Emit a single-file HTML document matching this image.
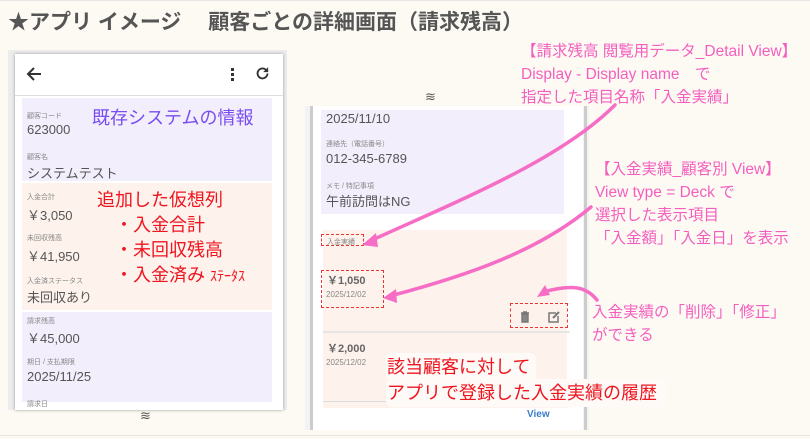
<!DOCTYPE html>
<html><head><meta charset="utf-8"><style>
*{margin:0;padding:0;box-sizing:border-box}
body{width:810px;height:439px;background:#fdfaf3;position:relative;overflow:hidden;font-family:"Liberation Sans","Noto Sans CJK JP",sans-serif}
.a{position:absolute;white-space:nowrap}
.lb{font-size:7px;color:#888}
.v{font-size:13px;color:#555}
.pk{color:#f45fbf;font-size:15.5px;line-height:23px}
.rd{color:#f0141e}
.box{position:absolute;border:1px dashed #e33}
</style></head><body>
<div class="a" style="left:0;top:0;width:810px;height:1px;background:#e6e6e6"></div>
<div class="a" style="left:8px;top:6px;font-size:21px;font-weight:bold;color:#555">★アプリ イメージ　 顧客ごとの詳細画面（請求残高）</div>

<!-- left phone -->
<div class="a" style="left:8px;top:50px;width:279px;height:360px;background:#ececec"></div>
<div class="a" style="left:15px;top:54px;width:268px;height:356px;background:#fff;box-shadow:0 0 3px #999"></div>
<svg class="a" style="left:26px;top:66px" width="16" height="16" viewBox="0 0 16 16"><path d="M15 8H2M8 2L2 8l6 6" stroke="#333" stroke-width="2" fill="none"/></svg>
<div class="a" style="left:231px;top:68px;width:3px;height:3px;background:#333;box-shadow:0 5px 0 #333,0 10px 0 #333"></div>
<svg class="a" style="left:254px;top:65px" width="17" height="17" viewBox="0 0 24 24"><path d="M19 12a7 7 0 1 1-2-5" stroke="#333" stroke-width="2.6" fill="none"/><path d="M20 3v7h-7z" fill="#333"/></svg>
<div class="a" style="left:15px;top:95px;width:268px;height:1px;background:#ddd"></div>
<div class="a" style="left:22px;top:98px;width:250px;height:83px;background:#f2eefc"></div>
<div class="a" style="left:22px;top:183px;width:250px;height:127px;background:#fdf2ec"></div>
<div class="a" style="left:22px;top:312px;width:250px;height:90px;background:#f2eefc"></div>
<div class="a lb" style="left:27px;top:111px">顧客コード</div>
<div class="a v" style="left:27px;top:122px">623000</div>
<div class="a lb" style="left:27px;top:152px">顧客名</div>
<div class="a v" style="left:27px;top:163px">システムテスト</div>
<div class="a" style="left:92px;top:104px;font-size:18px;color:#7a4df0">既存システムの情報</div>
<div class="a lb" style="left:27px;top:192px">入金合計</div>
<div class="a v" style="left:27px;top:205px">￥3,050</div>
<div class="a lb" style="left:27px;top:233px">未回収残高</div>
<div class="a v" style="left:27px;top:246px">￥41,950</div>
<div class="a lb" style="left:27px;top:276px">入金済ステータス</div>
<div class="a v" style="left:27px;top:287px">未回収あり</div>
<div class="a rd" style="left:97px;top:188px;font-size:18px;line-height:25px">追加した仮想列<br>　・入金合計<br>　・未回収残高<br>　・入金済み <span style="font-size:14px">ｽﾃｰﾀｽ</span></div>
<div class="a lb" style="left:27px;top:316px">請求残高</div>
<div class="a v" style="left:27px;top:328px">￥45,000</div>
<div class="a lb" style="left:27px;top:357px">期日 / 支払期限</div>
<div class="a v" style="left:27px;top:369px">2025/11/25</div>
<div class="a lb" style="left:27px;top:399px">請求日</div>
<div class="a" style="left:140px;top:408px;font-size:13px;color:#555">≋</div>

<!-- right phone -->
<div class="a" style="left:425px;top:89px;font-size:13px;color:#555">≋</div>
<div class="a" style="left:305px;top:106px;width:284px;height:324px;background:#f3f3f3"></div>
<div class="a" style="left:313px;top:106px;width:270px;height:324px;background:#fff"></div>
<div class="a" style="left:310px;top:106px;width:3px;height:324px;background:#ccc"></div>
<div class="a" style="left:584px;top:106px;width:3px;height:324px;background:#ccc"></div>
<div class="a" style="left:321px;top:110px;width:243px;height:104px;background:#f2eefc"></div>
<div class="a v" style="left:326px;top:111px">2025/11/10</div>
<div class="a lb" style="left:326px;top:139px">連絡先（電話番号）</div>
<div class="a v" style="left:326px;top:151px">012-345-6789</div>
<div class="a lb" style="left:326px;top:181px">メモ / 特記事項</div>
<div class="a v" style="left:326px;top:191px">午前訪問はNG</div>
<div class="a" style="left:323px;top:230px;width:244px;height:178px;background:#fdf2ec"></div>
<div class="a" style="left:323px;top:331px;width:247px;height:2px;background:#e6e6e6"></div>
<div class="a" style="left:323px;top:401px;width:247px;height:1px;background:#ddd"></div>
<div class="a lb" style="left:327px;top:237px">入金実績</div>
<div class="box" style="left:321px;top:234px;width:43px;height:12px"></div>
<div class="a" style="left:327px;top:272px;font-size:11px;font-weight:bold;color:#666">￥1,050</div>
<div class="a" style="left:326px;top:290px;font-size:8px;color:#888">2025/12/02</div>
<div class="box" style="left:321px;top:270px;width:63px;height:38px"></div>
<svg class="a" style="left:519px;top:311px" width="12" height="12" viewBox="0 0 12 12"><path d="M2 2h8M4 1h4M3 3h6v8H3z" stroke="#777" stroke-width="1.4" fill="#888"/></svg>
<svg class="a" style="left:548px;top:311px" width="13" height="12" viewBox="0 0 13 12"><path d="M8 2H1v9h9V5" stroke="#777" stroke-width="1.5" fill="none"/><path d="M5 7l6-6" stroke="#777" stroke-width="2"/></svg>
<div class="box" style="left:510px;top:303px;width:58px;height:25px"></div>
<div class="a" style="left:327px;top:340px;font-size:11px;font-weight:bold;color:#666">￥2,000</div>
<div class="a" style="left:326px;top:358px;font-size:8px;color:#888">2025/12/02</div>
<div class="a" style="left:386px;top:353px;width:150px;height:28px;background:#fdfaf7;border-radius:6px"></div>
<div class="a" style="left:386px;top:379px;width:280px;height:28px;background:#fdfaf7;border-radius:6px"></div>
<div class="a rd" style="left:387px;top:354px;font-size:18px;line-height:26px">該当顧客に対して<br>アプリで登録した入金実績の履歴</div>
<div class="a" style="left:527px;top:409px;font-size:10px;font-weight:bold;color:#3a7dc8">View</div>
<div class="a" style="left:0;top:435px;width:810px;height:1px;background:#e4e4e4"></div>

<!-- pink annotations -->
<div class="a pk" style="left:521px;top:40px">【請求残高 閲覧用データ_Detail View】<br>Display - Display name　で<br>指定した項目名称「入金実績」</div>
<div class="a pk" style="left:595px;top:158px">【入金実績_顧客別 View】<br>View type = Deck で<br>選択した表示項目<br>「入金額」「入金日」を表示</div>
<div class="a pk" style="left:592px;top:301px">入金実績の「削除」「修正」<br>ができる</div>
<svg class="a" style="left:0;top:0" width="810" height="439">
<g stroke="#f66dc6" stroke-width="3.5" fill="none" stroke-linecap="round">
<path d="M615 105 C560 160 460 200 370 241"/>
<path d="M591 207 C540 250 470 275 390 296"/>
<path d="M597 300 C585 285 570 285 543 292"/>
</g>
<g fill="#f66dc6">
<path d="M362 245 L376 233 L378 247 Z"/>
<path d="M383 298 L396 289 L397 303 Z"/>
<path d="M537 297 L545 285 L550 295 Z"/>
</g>
</svg>
</body></html>
